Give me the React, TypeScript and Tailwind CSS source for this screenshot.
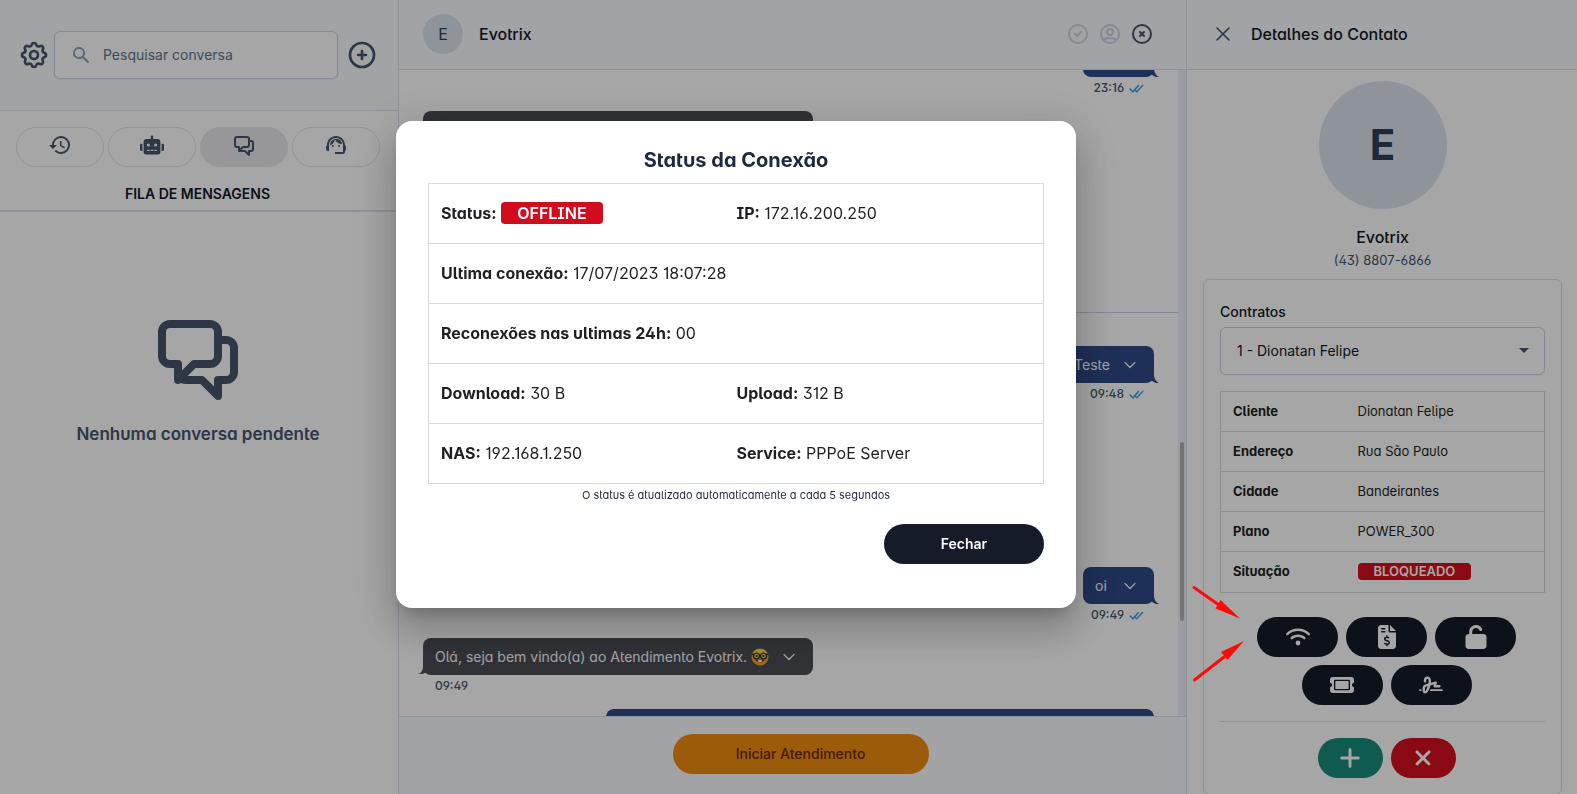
import React from 'react';
import { ChevronDown, X } from 'lucide-react';
import { FaRobot } from 'react-icons/fa';
import { FaFileInvoiceDollar, FaPlus, FaSignature, FaTicket, FaUnlock, FaWifi, FaXmark } from 'react-icons/fa6';
import {
    HiOutlineChatAlt2,
    HiOutlineCheckCircle,
    HiOutlineCog,
    HiOutlinePlusCircle,
    HiOutlineUserCircle,
    HiOutlineXCircle,
    HiSearch,
} from 'react-icons/hi';
import { MdHistory, MdSupportAgent } from 'react-icons/md';

const contract = [
    ['Cliente', 'Dionatan Felipe'],
    ['Endereço', 'Rua São Paulo'],
    ['Cidade', 'Bandeirantes'],
    ['Plano', 'POWER_300'],
];

const queues = [
    { label: 'Histórico', icon: <MdHistory className="size-6" />, active: false },
    { label: 'Robô', icon: <FaRobot className="size-6" />, active: false },
    { label: 'Fila', icon: <HiOutlineChatAlt2 className="size-6" />, active: true },
    { label: 'Atendimento', icon: <MdSupportAgent className="size-6" />, active: false },
];

const actions = [
    { label: 'Status da conexão', icon: <FaWifi className="size-6" /> },
    { label: 'Faturas', icon: <FaFileInvoiceDollar className="size-6" /> },
    { label: 'Desbloquear', icon: <FaUnlock className="size-6" /> },
    { label: 'Chamados', icon: <FaTicket className="size-6" /> },
    { label: 'Assinatura', icon: <FaSignature className="size-6" /> },
];

function DoubleCheck() {
    return (
        <svg className="w-[15px] h-[9px] text-[#38a3e0]" viewBox="0 0 15 9" fill="none" stroke="currentColor" strokeWidth="1.5">
            <path d="M0.7 4.6 L4 7.8 L9.8 1" />
            <path d="M5.6 5.8 L7.8 7.8 L14 1" />
        </svg>
    );
}

function NerdFace() {
    return (
        <svg className="size-[18px]" viewBox="0 0 18 18" role="img" aria-label="nerd">
            <circle cx="9" cy="9" r="8.5" fill="#f5a623" />
            <ellipse cx="9" cy="6" rx="7" ry="5" fill="#fbd94a" />
            <path d="M3.5 11.5 Q9 17.5 14.5 11.5 Z" fill="#8a3a12" />
            <rect x="7.2" y="12" width="3.6" height="2" fill="#fff" />
            <circle cx="5.5" cy="8" r="3" fill="#d9c35a" stroke="#33261a" strokeWidth="1.2" />
            <circle cx="12.5" cy="8" r="3" fill="#d9c35a" stroke="#33261a" strokeWidth="1.2" />
            <path d="M0.8 6.4 H3 M15 6.4 H17.2 M8.4 7.4 H9.6" stroke="#33261a" strokeWidth="1.2" />
            <circle cx="5.7" cy="8" r="1" fill="#33261a" />
            <circle cx="12.3" cy="8" r="1" fill="#33261a" />
        </svg>
    );
}

interface MessageProps {
    mine?: boolean;
    time: string;
    className?: string;
    children?: React.ReactNode;
}

function Message({ mine = false, time, className = '', children }: MessageProps) {
    return (
        <div className={`flex flex-col shrink-0 h-[71px] ${mine ? 'items-end' : 'items-start'} ${className}`}>
            <div className={`relative flex items-center h-[37px] min-w-[71px] pl-3 pr-[14px] rounded-lg text-sm text-slate-50 ${mine ? 'bg-[#2e4a87]' : 'bg-[#4b4d54]'}`}>
                {children}
                {children && (
                    <button aria-label="Opções" className="ml-auto pl-[10px]">
                        <ChevronDown className="size-5" strokeWidth={1.5} />
                    </button>
                )}
                {mine ? (
                    <svg className="absolute -right-[5px] bottom-0 w-[11px] h-2 text-[#2e4a87]" viewBox="0 0 11 8" fill="currentColor">
                        <path d="M6 0 Q6.5 6 11 8 H8 Q5 7 3 5 Z" />
                    </svg>
                ) : (
                    <svg className="absolute -left-[5px] bottom-0 w-[11px] h-2 text-[#4b4d54]" viewBox="0 0 11 8" fill="currentColor">
                        <path d="M5 0 Q4.5 6 0 7 H3 Q6 7 8 5 Z" />
                    </svg>
                )}
            </div>
            <div className={`flex items-center gap-[5px] h-[22px] text-xs font-medium text-slate-600 ${mine ? 'pr-[10px]' : 'pl-3'}`}>
                <span>{time}</span>
                {mine && <DoubleCheck />}
            </div>
        </div>
    );
}

function Sidebar() {
    return (
        <aside className="flex flex-col shrink-0 w-[399px] border-r border-[#d9e1ec] bg-white">
            <div className="flex items-center h-[111px] pl-[18px] pr-5 pb-px border-b border-[#d9e1ec] bg-slate-50 text-slate-600">
                <button aria-label="Configurações"><HiOutlineCog className="size-8" /></button>
                <label className="flex flex-1 items-center h-12 ml-1 mr-2 pl-4 border border-slate-300 rounded-md bg-white shadow-xs">
                    <HiSearch className="size-5 text-slate-400" />
                    <input
                        type="text"
                        aria-label="Pesquisar conversa"
                        placeholder="Pesquisar conversa"
                        className="flex-1 min-w-0 ml-3 text-sm outline-none placeholder:text-slate-500 [font-feature-settings:normal]"
                    />
                </label>
                <button aria-label="Nova conversa"><HiOutlinePlusCircle className="size-8" /></button>
            </div>

            <div className="flex gap-1 pt-4 pl-4 pr-[18px]">
                {queues.map((q) => (
                    <button
                        key={q.label}
                        aria-label={q.label}
                        className={`flex flex-1 justify-center h-10 pt-[5px] rounded-full border text-slate-600 ${q.active ? 'bg-[#e9e9eb] border-[#e9e9eb]' : 'border-[#e4e4e7]'}`}
                    >
                        {q.icon}
                    </button>
                ))}
            </div>
            <h2 className="pt-[17px] pb-[6px] pr-[3px] border-b-2 border-[#d9e1ec] text-center text-sm leading-5 font-semibold text-slate-900 [font-feature-settings:normal]">
                FILA DE MENSAGENS
            </h2>

            <div className="flex flex-col items-center pt-24 pr-[2px]">
                <HiOutlineChatAlt2 className="size-24 text-slate-600" />
                <p className="mt-4 text-[17px] leading-7 font-semibold text-slate-600">Nenhuma conversa pendente</p>
            </div>
        </aside>
    );
}

function Chat() {
    return (
        <main className="flex flex-col flex-1 min-w-0 bg-white">
            <header className="flex items-center shrink-0 h-[70px] pl-6 pr-8 pb-px border-b border-[#d9e1ec] bg-slate-50">
                <div className="flex items-center justify-center size-10 rounded-full bg-[#dce4ee] text-slate-700">E</div>
                <h1 className="ml-4 font-medium text-slate-900">Evotrix</h1>
                <div className="flex gap-2 ml-auto text-slate-600">
                    <button aria-label="Finalizar" disabled className="text-slate-300"><HiOutlineCheckCircle className="size-6" /></button>
                    <button aria-label="Contato" disabled className="text-slate-300"><HiOutlineUserCircle className="size-6" /></button>
                    <button aria-label="Fechar conversa"><HiOutlineXCircle className="size-6" /></button>
                </div>
            </header>

            <div className="flex flex-1 min-h-0">
                <div className="flex flex-col flex-1 min-w-0 overflow-hidden">
                    {/* The list is scrolled, so the first message is cut by the header */}
                    <div className="flex flex-col px-6 -mt-[30px]">
                        <Message mine time="23:16" />
                        <Message time="23:16" className="mb-[130px]">
                            <span className="mr-1">Olá, seja bem vindo(a) ao Atendimento Evotrix.</span>
                            <NerdFace />
                        </Message>
                        <hr className="-mx-6 mb-[33px] border-[#cdd6e2]" />
                        <Message mine time="09:48" className="mb-[150px]"><span>Teste</span></Message>
                        <Message mine time="09:49"><span>oi</span></Message>
                        <Message time="09:49">
                            <span className="mr-1">Olá, seja bem vindo(a) ao Atendimento Evotrix.</span>
                            <NerdFace />
                        </Message>
                        <div className="self-end w-[548px] max-w-full h-[37px] rounded-lg bg-[#2e4a87]"></div>
                    </div>
                </div>
                <div className="flex flex-col items-center w-2 bg-[#eef1f7]">
                    <div className="w-1 h-[179px] mt-[372px] rounded-full bg-[#b4b4b7]"></div>
                </div>
            </div>

            <footer className="flex items-center justify-center shrink-0 h-[78px] pb-1 pl-4 border-t border-[#d9e1ec] bg-slate-50">
                <button className="w-64 h-10 rounded-full bg-[#f08c0e] text-sm font-medium text-[#6b2808] [font-feature-settings:normal]">
                    Iniciar Atendimento
                </button>
            </footer>
        </main>
    );
}

function ContactDetails() {
    return (
        <aside className="flex flex-col shrink-0 w-[391px] border-l border-[#d9e1ec] bg-white">
            <header className="flex items-center shrink-0 h-[70px] pl-6 pb-px border-b border-[#d9e1ec] bg-slate-50">
                <button aria-label="Fechar detalhes"><X className="size-6 text-slate-600" strokeWidth={1.6} /></button>
                <h2 className="ml-4 font-medium text-slate-900">Detalhes do Contato</h2>
            </header>

            <div className="flex flex-col flex-1 min-h-0 overflow-hidden pl-4 pr-[15px] pt-[11px]">
                <div className="flex items-center justify-center shrink-0 self-center size-32 pb-[2px] rounded-full bg-[#dce4ee] text-[42px] font-bold text-slate-700">E</div>
                <p className="mt-4 text-center font-medium text-slate-900">Evotrix</p>
                <p className="text-center text-[13px] leading-[22px] text-slate-600">(43) 8807-6866</p>

                <div className="shrink-0 mt-2 p-4 pt-[22px] border border-[#d9e1ec] rounded-md">
                    <label htmlFor="contract" className="block mb-[5px] text-sm leading-5 font-medium text-slate-900 [font-feature-settings:normal]">
                        Contratos
                    </label>
                    <div className="relative">
                        <select id="contract" className="w-full h-12 px-4 border border-slate-300 rounded-md bg-white shadow-xs appearance-none text-sm text-slate-900 [font-feature-settings:normal]">
                            <option>1 - Dionatan Felipe</option>
                        </select>
                        <svg className="absolute right-4 top-[21px] w-[10px] h-[5px] text-slate-600 pointer-events-none" viewBox="0 0 10 5" fill="currentColor">
                            <path d="M0 0 H10 L5 5 Z" />
                        </svg>
                    </div>

                    <table className="w-full mt-4 border-collapse border border-[#d8dadd] text-[13px] text-[#1d1f22]">
                        <tbody>
                            {contract.map(([name, value]) => (
                                <tr key={name} className="h-10 border-b border-[#d8dadd]">
                                    <th className="w-[125px] pl-3 text-left font-bold">{name}</th>
                                    <td className="pl-3">{value}</td>
                                </tr>
                            ))}
                            <tr className="h-[41px]">
                                <th className="pl-3 text-left font-bold">Situação</th>
                                <td className="pl-3">
                                    <span className="inline-block px-4 rounded-sm bg-[#d40e1c] leading-[17px] font-semibold text-white">BLOQUEADO</span>
                                </td>
                            </tr>
                        </tbody>
                    </table>

                    <div className="flex flex-wrap justify-center gap-y-2 mt-6">
                        {actions.map((a) => (
                            <button key={a.label} aria-label={a.label} className="flex items-center justify-center w-[81px] h-10 ml-2 rounded-full bg-[#151b29] text-white">
                                {a.icon}
                            </button>
                        ))}
                    </div>
                    <hr className="my-4 border-[#d9e1ec]" />
                    <div className="flex justify-center">
                        <button aria-label="Adicionar" className="flex items-center justify-center w-[65px] h-10 ml-2 rounded-full bg-[#198c7a] text-white">
                            <FaPlus className="size-6" />
                        </button>
                        <button aria-label="Remover" className="flex items-center justify-center w-[65px] h-10 ml-2 rounded-full bg-[#d40e1c] text-white">
                            <FaXmark className="size-6" />
                        </button>
                    </div>
                </div>
            </div>
        </aside>
    );
}

function ConnectionDialog() {
    return (
        <div className="fixed inset-0 z-40 flex items-center justify-center pr-[105px] pb-[66px] bg-black/35">
            <div
                role="dialog"
                aria-labelledby="dialog-title"
                className="flex flex-col w-[680px] px-8 pt-6 pb-11 rounded-2xl bg-white shadow-[0_11px_15px_-7px_rgba(0,0,0,0.2),0_24px_38px_3px_rgba(0,0,0,0.14),0_9px_46px_8px_rgba(0,0,0,0.12)]"
            >
                <h2 id="dialog-title" className="mb-2 text-center text-xl leading-[30px] font-bold text-slate-800">Status da Conexão</h2>
                <table className="w-full border-collapse border border-[#d6d9dd] table-fixed text-base text-[#1d1f22] [&_td]:pl-3 [&_tr]:h-[60px] [&_tr]:border-b [&_tr]:border-[#d6d9dd]">
                    <tbody>
                        <tr>
                            <td className="w-[296px]">
                                <b>Status:</b> <span className="inline-block px-4 rounded-sm bg-[#d10d1d] leading-[22px] font-semibold text-white">OFFLINE</span>
                            </td>
                            <td><b>IP:</b> 172.16.200.250</td>
                        </tr>
                        <tr>
                            <td colSpan={2}><b>Ultima conexão:</b> 17/07/2023 18:07:28</td>
                        </tr>
                        <tr>
                            <td colSpan={2}><b>Reconexões nas ultimas 24h:</b> 00</td>
                        </tr>
                        <tr>
                            <td><b>Download:</b> 30 B</td>
                            <td><b>Upload:</b> 312 B</td>
                        </tr>
                        <tr>
                            <td><b>NAS:</b> 192.168.1.250</td>
                            <td><b>Service:</b> PPPoE Server</td>
                        </tr>
                    </tbody>
                </table>
                <p className="mt-[3px] text-center text-[11px] leading-4 text-slate-800">O status é atualizado automaticamente a cada 5 segundos</p>
                <button className="self-end w-40 h-10 mt-[21px] rounded-full bg-[#151b29] text-sm font-semibold text-white [font-feature-settings:normal]">
                    Fechar
                </button>
            </div>
        </div>
    );
}

export default function App() {
    return (
        <div className="flex h-screen overflow-hidden font-[Inter,sans-serif] [font-feature-settings:'salt','cv11','cv05']">
            <Sidebar />
            <Chat />
            <ContactDetails />
            <ConnectionDialog />

            {/* Arrows pointing at the connection button */}
            <svg className="fixed z-50 top-[580px] right-[327px] w-[70px] h-[110px] text-[#ff0a0a] pointer-events-none" viewBox="0 0 70 110" fill="currentColor" stroke="currentColor">
                <path d="M14 7.5 L39 25" strokeWidth="3" strokeLinecap="round" />
                <path d="M60 38.5 L40.5 20 L35.5 28.5 Z" stroke="none" />
                <path d="M14.5 100 L44 77" strokeWidth="3" strokeLinecap="round" />
                <path d="M64 61 L41 72 L47.5 80 Z" stroke="none" />
            </svg>
        </div>
    );
}
